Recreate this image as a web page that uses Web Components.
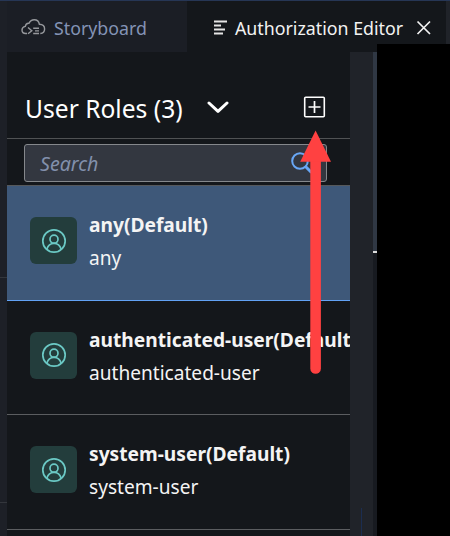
<!DOCTYPE html>
<html lang="en"><head><meta charset="utf-8"><title>Authorization Editor</title>
<style>html,body{margin:0;background:#14171b;overflow:hidden}</style></head>
<body><app-window></app-window>
<script>
const define=(name,html)=>{
  const t=document.createElement('template');t.innerHTML=html;
  customElements.define(name,class extends HTMLElement{
    constructor(){super();this.attachShadow({mode:'open'}).append(t.content.cloneNode(true));}
  });
};
define('editor-tab',`<style>
:host{display:flex;align-items:center;box-sizing:border-box;height:51px;padding-top:3px;color:#f2f2f2;font-size:17.8px;line-height:26px;white-space:nowrap}
:host([inactive]){background:#1b1e25;color:#8493b5;width:180px;padding-left:14px}
:host([active]){flex:1;padding-left:27px}
::slotted(svg){flex:none;display:block}
</style><slot name="icon"></slot><slot></slot><slot name="close"></slot>`);
define('panel-header',`<style>
:host{display:flex;align-items:center;box-sizing:border-box;height:87px;padding:24px 24px 0 17px;border-bottom:1px solid #505254;color:#fff}
.title{box-sizing:border-box;font-size:24.6px;line-height:34px;width:181px;white-space:nowrap;padding:4px 0 0 1px}
.add{margin-left:auto}svg{display:block;flex:none}
</style><span class="title"><slot></slot></span>
<svg width="24" height="16"><path d="M4 4 13 12.4 22 4" fill="none" stroke="#fff" stroke-width="3" stroke-linecap="round" stroke-linejoin="round"/></svg>
<svg class="add" width="23" height="23"><rect x="1.7" y="1.2" width="19.6" height="19.6" rx="1" fill="none" stroke="#fff" stroke-width="1.6"/><path d="M11.5 5v12M5.5 11h12" stroke="#fff" stroke-width="1.7"/></svg>`);
define('search-box',`<style>
:host{display:block;box-sizing:border-box;height:47px;padding:5px 23px 3px 17px;border-bottom:1px solid #55585b}
.box{display:flex;align-items:center;box-sizing:border-box;height:38px;border:1px solid #85888c;border-radius:3px;background:#333740;padding:0 9px 0 15px;color:#8290ac;font-size:19.6px;font-style:italic}
svg{margin-left:auto}
</style><div class="box"><span><slot></slot></span><svg width="28" height="26"><circle cx="11" cy="11" r="7.8" fill="none" stroke="#68a7f6" stroke-width="2"/><path d="m16.5 16.5 6 6" stroke="#68a7f6" stroke-width="3"/></svg></div>`);
define('user-avatar',`<style>
:host{display:grid;place-items:center;flex:none;width:47px;height:47px;border-radius:6px;background:#233d3c}
svg{display:block}
</style><svg width="26" height="26" fill="none" stroke="#6bc9c5" stroke-width="1.7"><circle cx="13" cy="13" r="11.2"/><circle cx="13" cy="11.2" r="4"/><path d="M5.8 21.2C7 17.2 9.8 15.3 13 15.3s6 1.9 7.2 5.9"/></svg>`);
define('role-row',`<style>
:host{display:flex;align-items:flex-start;gap:12px;box-sizing:border-box;height:114.5px;padding:31px 0 0 23px;border-bottom:1px solid #5b5d60;overflow:hidden;color:#f4f4f4;font-size:19.1px;line-height:26px;white-space:nowrap}
:host([selected]){background:#3e5879;border-bottom-color:#62a2f5}
.text{display:grid;grid-template-rows:33px 33px;margin-top:-5px}
b{font-size:19.2px}
</style><user-avatar></user-avatar><div class="text"><b><slot></slot></b><span><slot name="id"></slot></span></div>`);
define('red-arrow',`<style>:host{position:absolute;left:300px;top:130px;width:32px;height:245px}svg{display:block}</style>
<svg width="32" height="245"><path d="M15.6 25V238.5" stroke="#ff4141" stroke-width="10.6" stroke-linecap="round"/><path d="M15.6.5 31 31.8H.2Z" fill="#ff4141"/></svg>`);
define('app-window',`<style>
:host{display:grid;grid-template-rows:1px 51px 484px;width:450px;height:536px;position:relative;overflow:hidden;background:#14171b;font-family:"Noto Sans","Open Sans",sans-serif}
.top{background:#263655}
.tabs,.main{display:grid}
.tabs{grid-template-columns:7px 180px 259px 4px}
.main{grid-template-columns:7px 343px 23px 4px 73px}
.edge{background:#202329}.gutter{background:#202329;position:relative}
.left{background:#1d2027;position:relative}
.left i{position:absolute;left:0;width:7px;height:1px;background:#33363c}
.gutter i{position:absolute;left:11px;top:456px;width:1px;height:28px;background:#1b2d50}
.split{display:grid;grid-template-rows:199px 2px 283px;background:#171a20}
.split i:nth-child(1){background:#303844}.split i:nth-child(2){background:#dcdcdc}
.panel{overflow:hidden;background:#14171b}
.black{background:#000;margin-top:-8px}
.ic1{margin-right:8px}.ic2{margin-right:7px}.x{margin-left:12px}
</style>
<div class="top"></div>
<div class="tabs"><div class="left"></div>
<editor-tab inactive><svg slot="icon" class="ic1" width="25" height="20" fill="none" stroke="#96989c" stroke-width="1.4"><path d="M6 15.5H4.7C2.5 15.5 1 14 1 12c0-2 1.4-3.2 3.3-3.6C4.7 5.8 6 5 8 5.2 9.2 2.7 11 1.7 13.2 1.7c2.8 0 4.8 2 5.2 4.6 3.2.1 5.2 1.9 5.2 4.7 0 2.6-1.8 4.3-4.3 4.5"/><path d="m7 9.5 3.8 3.2L7 15.8M12.2 10.3H18M14 12.9h4M12.2 15.5H18"/></svg><span>Storyboard</span></editor-tab>
<editor-tab active><svg slot="icon" class="ic2" width="14" height="18" stroke="#e5e5e5" stroke-width="1.8"><path d="M0 2.5h13M0 6.5h7M0 10.5h11M0 14.5h9"/></svg><span>Authorization Editor</span><svg slot="close" class="x" width="18" height="18"><path d="m2.5 2.5 12.5 12.5M15 2.5 2.5 15" stroke="#f2f2f2" stroke-width="1.7"/></svg></editor-tab>
<div class="edge"></div></div>
<div class="main"><div class="left"><i style="top:225px"></i><i style="top:450px"></i></div>
<div class="panel"><panel-header>User Roles (3)</panel-header><search-box>Search</search-box>
<role-row selected>any(Default)<span slot="id">any</span></role-row>
<role-row>authenticated-user(Default)<span slot="id">authenticated-user</span></role-row>
<role-row>system-user(Default)<span slot="id">system-user</span></role-row></div>
<div class="gutter"><i></i></div><div class="split"><i></i><i></i></div><div class="black"></div></div>
<red-arrow></red-arrow>`);
</script></body></html>
